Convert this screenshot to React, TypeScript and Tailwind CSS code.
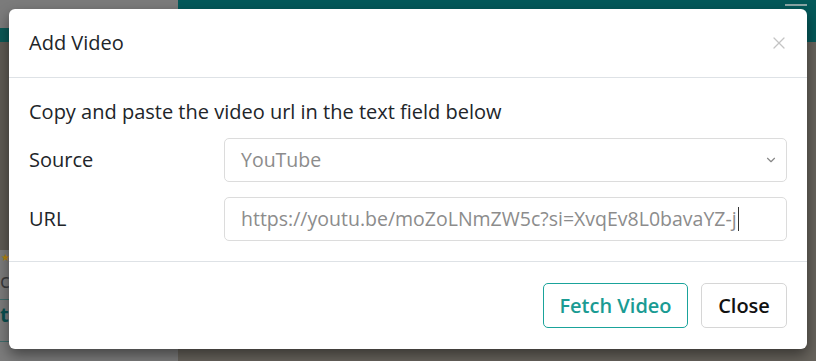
import { ChevronDown, X } from 'lucide-react'

export default function App() {
  return (
    <div className="relative h-[361px] w-[816px] overflow-hidden bg-[#5f5b54] font-['Open_Sans',sans-serif]">
      {/* dimmed page behind the dialog */}
      <div className="flex h-[42px]">
        <div className="flex w-[178px] flex-col">
          <div className="h-[28px] bg-[#7b7b7b]" />
          <div className="h-[14px] bg-[#0b5856]" />
        </div>
        <div className="flex flex-1 justify-end bg-[#04595a] pr-[9px] pt-[4px]">
          <div className="h-[2px] w-[22px] bg-[#8aa6a6]" />
        </div>
      </div>
      <div className="flex h-[319px]">
        <div className="flex w-[178px] flex-col">
          <div className="h-[208px] bg-[#5f5b54]" />
          <div className="flex flex-1 flex-col bg-[#7c7c7c] text-[20px]">
            <div className="h-[14px] pl-[1px] text-[10px] text-[#b8860b]">★</div>
            <div className="h-[36px] border-b border-[#3f6b6b] pt-[2px] text-[#3a3a3a]">c</div>
            <div className="h-[42px] border-b border-[#3f6b6b] font-bold text-[#0b4f4f]">t</div>
          </div>
        </div>
        <div className="flex-1 bg-[#67635c]" />
      </div>

      {/* dialog */}
      <div className="absolute left-[9px] top-[9px] w-[798px] rounded-[6px] bg-white shadow-[0_6px_14px_rgba(0,0,0,0.45)]">
        <div className="flex h-[69px] items-center justify-between border-b border-[#dee2e6] px-[20px]">
          <h1 className="text-[20px] text-[#212529]">Add Video</h1>
          <X className="mr-[-2px] h-[20px] w-[20px] text-[#c4c4c4]" strokeWidth={1.5} />
        </div>
        <div className="border-b border-[#dee2e6] px-[20px] pb-[20px] pt-[20px] text-[20px] text-[#212529]">
          <p className="leading-[28px]">Copy and paste the video url in the text field below</p>
          <div className="mt-[12px] grid grid-cols-[195px_1fr] gap-y-[15px]">
            <label className="flex items-center">Source</label>
            <div className="flex h-[44px] items-center justify-between rounded-[5px] border border-[#dcdcdc] pl-[16px] pr-[8px] text-[19.5px] text-[#8c8c8c]">
              <span>YouTube</span>
              <ChevronDown className="h-[14px] w-[14px] text-[#888]" strokeWidth={2} />
            </div>
            <label className="flex items-center">URL</label>
            <div className="flex h-[44px] items-center rounded-[5px] border border-[#dcdcdc] pl-[16px] text-[19.5px] text-[#8c8c8c]">
              <span>https://youtu.be/moZoLNmZW5c?si=XvqEv8L0bavaYZ-j</span>
              <span className="ml-[1px] h-[24px] w-[1px] bg-[#333]" />
            </div>
          </div>
        </div>
        <div className="flex justify-end gap-[13px] px-[20px] pb-[21px] pt-[21px]">
          <button className="h-[45px] w-[145px] rounded-[5px] border border-[#1aa39b] text-[20px] font-semibold text-[#1a9b93]">
            Fetch Video
          </button>
          <button className="h-[45px] w-[86px] rounded-[5px] border border-[#d6d6d6] text-[20px] font-semibold text-[#111]">
            Close
          </button>
        </div>
      </div>
    </div>
  )
}
